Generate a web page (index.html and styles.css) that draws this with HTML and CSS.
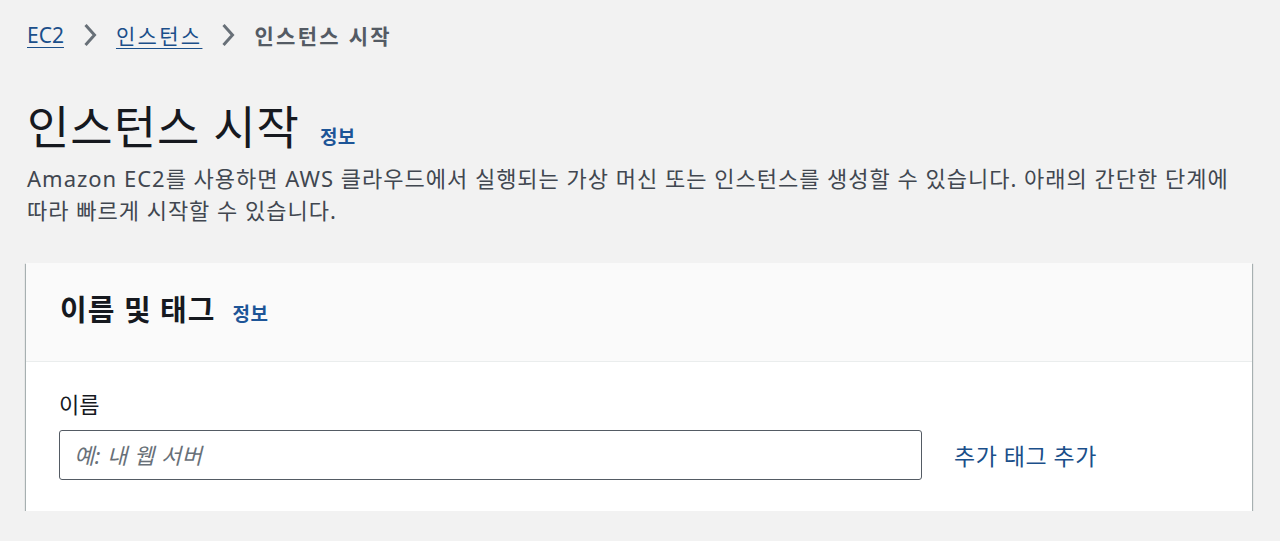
FILE: index.html
```html
<!DOCTYPE html>
<html lang="ko">
<head>
<meta charset="utf-8">
<link rel="stylesheet" href="styles.css">
</head>
<body>
<div class="page">
  <nav class="crumbs">
    <a class="crumb-link crumb-latin" href="#">EC2</a>
    <svg class="chev" width="14" height="24" viewBox="0 0 14 24"><path d="M2.5 2 L11.5 12 L2.5 22" fill="none" stroke="#687078" stroke-width="3"/></svg>
    <a class="crumb-link" href="#">인스턴스</a>
    <svg class="chev" width="14" height="24" viewBox="0 0 14 24"><path d="M2.5 2 L11.5 12 L2.5 22" fill="none" stroke="#687078" stroke-width="3"/></svg>
    <span class="crumb-current">인스턴스 시작</span>
  </nav>
  <header class="page-head">
    <h1 class="title"><span class="title-text">인스턴스 시작</span><a class="info" href="#">정보</a></h1>
    <p class="desc">Amazon EC2를 사용하면 AWS 클라우드에서 실행되는 가상 머신 또는 인스턴스를 생성할 수 있습니다. 아래의 간단한 단계에 따라 빠르게 시작할 수 있습니다.</p>
  </header>
  <section class="card">
    <div class="card-head">
      <h2 class="card-title"><span class="card-title-text">이름 및 태그</span><a class="info info-sm" href="#">정보</a></h2>
    </div>
    <div class="card-body">
      <label class="field-label" for="name">이름</label>
      <div class="field-row">
        <input id="name" class="text-input" type="text" placeholder="예: 내 웹 서버">
        <a class="add-tags" href="#">추가 태그 추가</a>
      </div>
    </div>
  </section>
</div>
</body>
</html>
```
FILE: styles.css
```css
html, body {
  margin: 0;
  padding: 0;
  background: #f2f2f2;
}
body {
  font-family: "Noto Sans", "Noto Sans CJK KR", sans-serif;
  color: #16191f;
}
.page {
  padding: 16px 28px 0 27px;
}
.crumbs {
  display: flex;
  align-items: center;
  height: 38px;
  font-size: 21px;
  letter-spacing: 2.3px;
}
.crumb-link {
  color: #1b4f8a;
  text-decoration: underline;
  text-underline-offset: 4px;
  text-decoration-thickness: 1px;
}
.crumb-latin {
  letter-spacing: 0;
}
.chev {
  margin: 0 19px;
}
.crumb-current {
  color: #545b64;
  font-weight: 700;
}
.page-head {
  margin-top: 44px;
}
.title {
  margin: 0;
  display: flex;
  align-items: baseline;
}
.title-text {
  font-size: 46px;
  font-weight: 400;
  line-height: 56px;
  letter-spacing: 1px;
  color: #16191f;
}
.info {
  font-size: 19px;
  font-weight: 700;
  color: #1d5597;
  text-decoration: none;
  margin-left: 20px;
  letter-spacing: 0.5px;
}
.desc {
  margin: 8px 0 0 0;
  font-size: 22px;
  line-height: 32px;
  letter-spacing: 1px;
  word-break: keep-all;
  color: #414750;
  max-width: 1215px;
}
.card {
  margin: 37px 0 0 -1px;
  width: 1226px;
  background: #fff;
  box-shadow: 0 1px 1px 0 rgba(0,28,36,0.45), 1px 1px 1px 0 rgba(0,28,36,0.25), -1px 1px 1px 0 rgba(0,28,36,0.25);
}
.card-head {
  background: #fafafa;
  border-bottom: 1px solid #eaeded;
  height: 99px;
  box-sizing: border-box;
  padding: 26px 34px 0;
}
.card-title {
  margin: 0;
  display: flex;
  align-items: baseline;
}
.card-title-text {
  font-size: 29px;
  font-weight: 700;
  letter-spacing: 1px;
  line-height: 42px;
}
.info-sm {
  margin-left: 17px;
}
.card-body {
  padding: 27px 34px 31px 33px;
  display: flex;
  flex-direction: column;
}
.field-label {
  font-size: 22px;
  line-height: 30px;
  color: #16191f;
  margin-bottom: 11px;
}
.field-row {
  display: flex;
  align-items: center;
}
.text-input {
  width: 863px;
  height: 50px;
  box-sizing: border-box;
  border: 1px solid #545b64;
  border-radius: 3px;
  padding: 0 14px;
  font-family: "Noto Sans", "Noto Sans CJK KR", sans-serif;
  font-size: 22px;
  letter-spacing: 0.5px;
  color: #16191f;
  background: #fff;
}
.text-input::placeholder {
  color: #687078;
  font-style: italic;
}
.add-tags {
  margin-left: 32px;
  font-size: 23px;
  letter-spacing: 0.5px;
  color: #1b4f8a;
  text-decoration: none;
}
```
